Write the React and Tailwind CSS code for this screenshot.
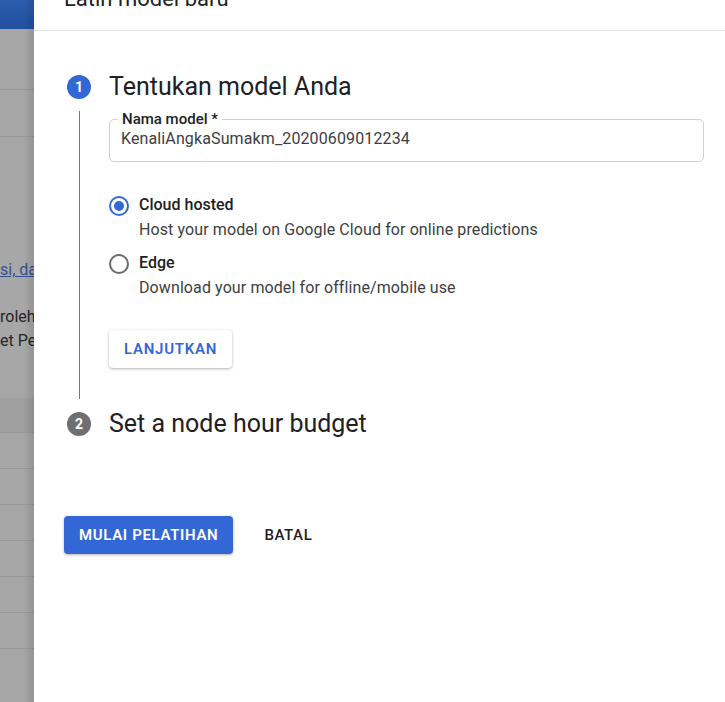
import React from "react";

function Radio({ checked }) {
  return checked ? (
    <div className="mt-[4px] flex h-5 w-5 shrink-0 items-center justify-center rounded-full border-2 border-[#3367d6]">
      <div className="h-[10px] w-[10px] rounded-full bg-[#3367d6]" />
    </div>
  ) : (
    <div className="mt-[4px] h-5 w-5 shrink-0 rounded-full border-2 border-[#6a6a6a]" />
  );
}

export default function App() {
  return (
    <div
      className="flex h-[702px] w-[725px] overflow-hidden bg-white"
      style={{ fontFamily: "Roboto, 'Liberation Sans', sans-serif" }}
    >
      {/* dimmed background page */}
      <div className="relative flex w-[34px] shrink-0 flex-col overflow-hidden bg-[#a7a7a7]">
        <div className="h-[29px] shrink-0 bg-gradient-to-b from-[#2c5eae] to-[#21509f]" />
        <div className="h-[61px] shrink-0 border-b border-[#999]" />
        <div className="h-[47px] shrink-0 border-b border-[#999]" />
        <div className="h-[122px] shrink-0" />
        <div className="whitespace-nowrap text-[16px] leading-[22px] text-[#37508f] underline decoration-[#37508f]">
          si, dan
        </div>
        <div className="h-[24px] shrink-0" />
        <div className="whitespace-nowrap text-[16px] leading-[24px] text-[#262626]">roleh</div>
        <div className="whitespace-nowrap text-[16px] leading-[24px] text-[#262626]">et Pelatihan</div>
        <div className="h-[45px] shrink-0" />
        <div className="h-[35px] shrink-0 border-b border-[#999] bg-[#9f9f9f]" />
        <div className="h-[36px] shrink-0 border-b border-[#999]" />
        <div className="h-[36px] shrink-0 border-b border-[#999]" />
        <div className="h-[36px] shrink-0 border-b border-[#999]" />
        <div className="h-[36px] shrink-0 border-b border-[#999]" />
        <div className="h-[36px] shrink-0 border-b border-[#999]" />
        <div className="h-[36px] shrink-0 border-b border-[#999]" />
        <div className="absolute inset-y-0 right-0 w-[10px] bg-gradient-to-r from-transparent to-[rgba(0,0,0,0.12)]" />
      </div>

      {/* side panel */}
      <div className="flex flex-1 flex-col bg-white text-[#202124]">
        <div className="flex h-[31px] shrink-0 items-start border-b border-[#e0e0e0] pl-[30px]">
          <div className="mt-[-15px] whitespace-nowrap text-[22px] leading-[28px] text-[#202124]">
            Latih model baru
          </div>
        </div>

        {/* step 1 */}
        <div className="mt-[40px] flex pl-[33px] pr-[21px]">
          <div className="flex w-6 shrink-0 flex-col items-center">
            <div className="mt-[4px] flex h-6 w-6 items-center justify-center rounded-full bg-[#3367d6] text-[14px] font-bold text-white">
              1
            </div>
            <div className="mt-[12px] w-px flex-1 bg-[#777]" />
          </div>
          <div className="ml-[18px] flex flex-1 flex-col pb-[31px]">
            <div className="text-[25px] leading-[32px] text-[#202124]">Tentukan model Anda</div>
            <div className="relative mt-[16px] h-[43px] rounded-[5px] border border-[#d0d0d0] px-[11px] pt-[7px]">
              <div className="absolute left-[8px] top-[-9px] bg-white px-[4px] text-[15px] font-medium leading-[16px] text-[#202124]">
                Nama model *
              </div>
              <div className="text-[16px] leading-[24px] tracking-[0.12px] text-[#3c4043]">
                KenaliAngkaSumakm_20200609012234
              </div>
            </div>

            <div className="mt-[30px] flex">
              <Radio checked />
              <div className="ml-[10px] flex flex-col">
                <div className="text-[16px] font-medium leading-[25px] text-[#202124]">Cloud hosted</div>
                <div className="text-[16px] leading-[25px] tracking-[0.1px] text-[#3c4043]">
                  Host your model on Google Cloud for online predictions
                </div>
              </div>
            </div>
            <div className="mt-[8px] flex">
              <Radio />
              <div className="ml-[10px] flex flex-col">
                <div className="text-[16px] font-medium leading-[25px] text-[#202124]">Edge</div>
                <div className="text-[16px] leading-[25px] tracking-[0.1px] text-[#3c4043]">
                  Download your model for offline/mobile use
                </div>
              </div>
            </div>

            <div className="mt-[30px] flex">
              <button className="flex h-[38px] items-center rounded-[4px] bg-white px-[15px] text-[15px] font-semibold tracking-[0.75px] text-[#3367d6] shadow-[0_1px_3px_rgba(0,0,0,0.3)]">
                LANJUTKAN
              </button>
            </div>
          </div>
        </div>

        {/* step 2 */}
        <div className="mt-[9px] flex pl-[33px]">
          <div className="flex w-6 shrink-0 flex-col items-center">
            <div className="mt-[4px] flex h-6 w-6 items-center justify-center rounded-full bg-[#6f6f6f] text-[14px] font-bold text-white">
              2
            </div>
          </div>
          <div className="ml-[18px] text-[25px] leading-[32px] text-[#202124]">Set a node hour budget</div>
        </div>

        {/* actions */}
        <div className="mt-[76px] flex items-center pl-[30px]">
          <button className="flex h-[38px] items-center rounded-[4px] bg-[#3367d6] px-[15px] text-[15px] font-semibold tracking-[0.65px] text-white shadow-[0_1px_3px_rgba(0,0,0,0.3)]">
            MULAI PELATIHAN
          </button>
          <button className="ml-[16px] flex h-[38px] items-center px-[15px] text-[15px] font-medium tracking-[0.6px] text-[#202124]">
            BATAL
          </button>
        </div>
      </div>
    </div>
  );
}
